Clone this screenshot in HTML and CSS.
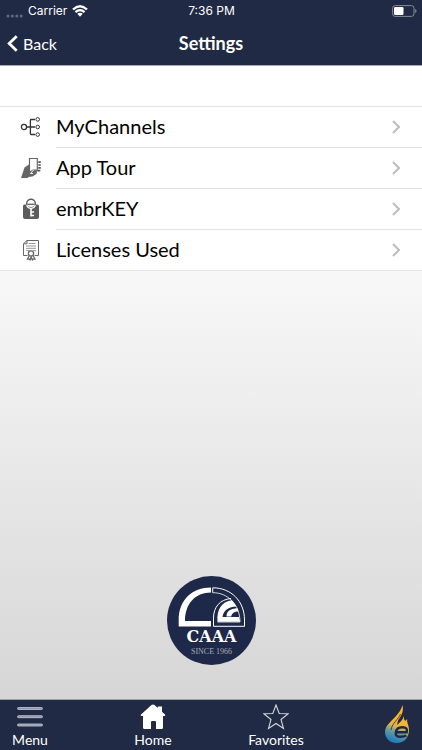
FILE: index.html
```html
<!DOCTYPE html>
<html lang="en">
<head>
    <meta charset="UTF-8">
    <meta name="viewport" content="width=device-width, initial-scale=1.0">
    <title>Settings</title>
    <link rel="stylesheet" href="styles.css">
</head>
<body>
    <header>
        <!-- Status bar -->
        <div class="status">
            <div class="carrier">
                <svg width="17" height="4" viewBox="0 0 17 4" fill="#626a7e"><circle cx="2" cy="2" r="1.5"/><circle cx="6.4" cy="2" r="1.5"/><circle cx="10.8" cy="2" r="1.5"/><circle cx="15.2" cy="2" r="1.5"/></svg>
                <span>Carrier</span>
                <svg width="16" height="12" viewBox="0 0 16 12" fill="none" stroke="#fff" stroke-width="2.3"><path d="M1 4.5Q8-2 15 4.5M3.5 7.2Q8 3 12.5 7.2"/><path d="M5.3 8.8Q8 6.7 10.7 8.8L8 11.7z" fill="#fff" stroke="none"/></svg>
            </div>
            <span>7:36 PM</span>
            <div class="battery">
                <svg width="25" height="12" viewBox="0 0 25 12"><rect x=".6" y=".6" width="21.4" height="10.8" rx="2.6" fill="none" stroke="#858b9b"/><rect x="2" y="2" width="9.5" height="8" rx="1.3" fill="#fff"/><path d="M23.2 4v4q1.3-.5 1.3-2t-1.3-2z" fill="#858b9b"/></svg>
            </div>
        </div>
        <nav class="title-bar">
            <a class="back" href="#">
                <svg width="11" height="17" viewBox="0 0 11 17" fill="none" stroke="#fff" stroke-width="2.8"><path d="M9.7 1.2L2.2 8.5l7.500 7.300"/></svg>
                Back
            </a>
            <h1>Settings</h1>
        </nav>
    </header>

    <main>
        <ul class="settings">
            <li>
                <a href="#">
                    <svg class="icon" viewBox="0 0 22 22" fill="none" stroke="#333" stroke-width="1.3"><circle cx="4" cy="11" r="2.6"/><path d="M6.6 11H15M15 3.5h-3.8q-.8 0-.8.8v13.4q0 .8.8.8H15"/><g stroke-width="1"><circle cx="17.7" cy="3.4" r="1.8"/><circle cx="17.7" cy="11" r="1.8"/><circle cx="17.7" cy="18.6" r="1.8"/></g></svg>
                    <span>MyChannels</span>
                    <svg class="chevron" viewBox="0 0 8 14"><path d="M1 1l6 6-6 6"/></svg>
                </a>
            </li>
            <li>
                <a href="#">
                    <svg class="icon" viewBox="0 0 22 22"><path d="M1 21l2-6 1.500-4.500L9 7.500V14l8.500-1-1 4-4 2.500-4 .5-1 1z" fill="#666"/><path d="M9.500 1.500h7.800v11.700h-4.300l-3.500 2z" fill="#fff" stroke="#666" stroke-width="1.200"/><path d="M13.500 13l-3 3.500h2.500" fill="none" stroke="#fff" stroke-width=".9"/><path d="M18.300 5.200h2.500M18.300 8h2.500M18.300 10.800h2.500M17.500 13.600h2.800" fill="none" stroke="#555" stroke-width="1.700"/></svg>
                    <span>App Tour</span>
                    <svg class="chevron" viewBox="0 0 8 14"><path d="M1 1l6 6-6 6"/></svg>
                </a>
            </li>
            <li>
                <a href="#">
                    <svg class="icon" viewBox="0 0 22 22" fill="none"><path d="M3 8q0-1.500 1.500-1.500h13Q19 6.500 19 8v11q0 2-2 2H5q-2 0-2-2z" fill="#5c5c5c"/><circle cx="11" cy="5.500" r="4.300" fill="#fff" stroke="#5c5c5c" stroke-width="1.400"/><path d="M6.700 7q1 3.300 4.300 3.300T15.300 7" stroke="#fff" stroke-width="1.300"/><path d="M7.500 6.300h7" stroke="#5c5c5c" stroke-width="1.300"/><path d="M11 10v8.500M11 14h3M11 17.500h3" stroke="#fff" stroke-width="1.600"/></svg>
                    <span>embrKEY</span>
                    <svg class="chevron" viewBox="0 0 8 14"><path d="M1 1l6 6-6 6"/></svg>
                </a>
            </li>
            <li>
                <a href="#">
                    <svg class="icon" viewBox="0 0 22 22" fill="none" stroke="#666"><path d="M7.500 16.500h-4V4.800L7 1.500h11.500v15h-4M3.500 4.800H7V1.500"/><path d="M8.500 4.500h7M6 7h10M6 9.300h10M6 11.600h3.500M13 11.600h3" stroke="#999"/><circle cx="11" cy="14.500" r="2.600" fill="#fff" stroke-width="1.300"/><path d="M9.300 16.800L7.500 20l1.700-.2.900 1.200 1-3.200 1.200 3.200.9-1.200 1.700.2-1.800-3.200" stroke-width="1.200"/></svg>
                    <span>Licenses Used</span>
                    <svg class="chevron" viewBox="0 0 8 14"><path d="M1 1l6 6-6 6"/></svg>
                </a>
            </li>
        </ul>

        <svg class="logo" viewBox="12 11 89 89" role="img" aria-label="CAAA since 1966">
            <circle cx="56.500" cy="55.500" r="44.500" fill="#1e2848"/>
            <path d="M23.700 61.500V55C23.700 35 37 22.500 56 22.500V27.500C40 27.500 30 39 30 56H56v5.500z" fill="#fff"/>
            <path d="M57.700 27.700V22.800C76 22.800 89.500 36 89.500 55v6.300H58.500V53C58.500 42 65 34.500 76 33.500" fill="none" stroke="#fff"/>
            <path d="M57.700 27.700C73 27.500 85 40 85 57H62.500" fill="none" stroke="#fff" stroke-width=".8"/>
            <path d="M62.500 56.800C61.500 44 67 36.500 77 35.300L81.500 41.500C72 42 68.500 46 67.500 52H84l1 4.800z" fill="#fff"/>
            <path d="M71.500 51.500C71.500 46.500 75 43.600 82.500 43.300l1 3.200c-4.500 0-6.500 1.800-7.300 5z" fill="#fff"/>
            <text class="logo-name" x="56.500" y="77">CAAA</text>
            <text class="logo-since" x="56.500" y="89">SINCE 1966</text>
        </svg>
    </main>

    <!-- Bottom tabs -->
    <footer>
        <a href="#">
            <svg width="26" height="26" viewBox="0 0 26 26" fill="#8d94a8" stroke="#c9cdd7" stroke-width=".8"><rect x=".5" y="3.500" width="25" height="2" rx="1"/><rect x=".5" y="11.700" width="25" height="2" rx="1"/><rect x=".5" y="20" width="25" height="2" rx="1"/></svg>
            Menu
        </a>
        <a class="home" href="#">
            <svg width="26" height="26" viewBox="0 0 26 26" fill="#fff"><path d="M13 .5q.8 0 1.500.6l3.300 3V2.500H22v5.300l3 2.700q1 1.200-.5 1.500H23v11.500q0 1.500-1.500 1.500H16v-7q0-1-1-1h-3q-1 0-1 1v7H4.500Q3 25 3 23.500V12H1.500Q0 11.700 1 10.500l10.500-9.400Q12.200.5 13 .5z"/></svg>
            Home
        </a>
        <a href="#">
            <svg width="26" height="26" viewBox="0 0 26 26" fill="none" stroke="#d5d8e0" stroke-width="1.100"><path d="M13 1l3.200 8.500 9 .3-7.200 5.700 2.500 9L13 19.500l-7.500 5 2.500-9L.8 9.800l9-.3z"/></svg>
            Favorites
        </a>
        <a class="brand" href="#" aria-label="embr">
            <svg width="26" height="40" viewBox="0 0 26 40">
                <defs>
                    <linearGradient id="flame" gradientUnits="userSpaceOnUse" x1="17" y1="14" x2="9" y2="36">
                        <stop offset="0" stop-color="#f9b62b"/>
                        <stop offset=".4" stop-color="#e5b34a"/>
                        <stop offset=".65" stop-color="#6a9c98"/>
                        <stop offset="1" stop-color="#2580bd"/>
                    </linearGradient>
                </defs>
                <path d="M18.500 1C20 8 17 12 14 16.500l-1 4.500c3-2.500 6-5 6.800-9q-.3 3.500 1.400 5l2-2c-.7 4 2 6.200 1.800 11.500C24.800 33.500 20 39 13 39 6 39 1 34.500 1 28 1 18.500 15 14 18.500 1z" fill="url(#flame)"/>
                <path d="M16.500 10C15 15 8 19 7 26" fill="none" stroke="#202a44" stroke-width=".8"/>
                <path d="M22.300 31.500q-2 1.300-5.500 1.300c-4.300 0-5.500-1.800-5-4.600.5-3.300 2.800-5 6.400-5 4.300 0 5.300 1.800 4.500 5H12.500" fill="none" stroke="#1b2946" stroke-width="2.400"/>
            </svg>
        </a>
    </footer>
</body>
</html>
```
FILE: styles.css
```css
* {
    box-sizing: border-box;
}

body {
    margin: 0;
    min-height: 100vh;
    display: flex;
    flex-direction: column;
    font-family: Lato, sans-serif;
    background: #fff;
}

a {
    color: inherit;
    text-decoration: none;
}

svg {
    display: block;
    flex: none;
}

header {
    background: #202a44;
    color: #fff;
    border-bottom: 1px solid #a5a9b4;
}

.status {
    display: grid;
    grid-template-columns: 1fr auto 1fr;
    align-items: center;
    height: 21px;
    padding: 0 5px 0 6px;
    font-family: Inter, sans-serif;
    font-size: 12px;
}

.carrier {
    display: flex;
    align-items: center;
    gap: 5px;
}

.carrier svg:first-child {
    align-self: flex-end;
}

.battery {
    justify-self: end;
}

.title-bar {
    display: grid;
    grid-template-columns: 1fr auto 1fr;
    align-items: center;
    height: 44px;
    padding: 0 7px;
}

.back {
    display: flex;
    align-items: center;
    gap: 5px;
    font-size: 16px;
}

h1 {
    margin: 0;
    font-size: 18px;
    font-weight: bold;
}

main {
    flex: 1;
    display: flex;
    flex-direction: column;
    align-items: center;
    justify-content: space-between;
    padding-bottom: 34px;
    background: linear-gradient(#fff, #f8f8f8 32%, #d6d6d6);
}

.settings {
    width: 100%;
    margin: 0;
    padding: 40px 0 0;
    list-style: none;
    background: #fff;
    border-bottom: 1px solid #e6e6e6;
}

.settings a {
    display: flex;
    align-items: center;
    padding: 0 22px 0 20px;
}

.settings li:first-child {
    border-top: 1px solid #e2e2e2;
}

.icon {
    width: 22px;
    height: 22px;
    margin-right: 14px;
}

.settings span {
    flex: 1;
    padding-bottom: 2px;
    line-height: 38px;
    font-size: 20px;
    color: #000;
}

.settings li + li::before {
    content: "";
    display: block;
    height: 1px;
    margin-left: 56px;
    background: #e2e2e2;
}

.chevron {
    width: 8px;
    height: 14px;
    fill: none;
    stroke: #bdbdc0;
    stroke-width: 2;
}

.logo {
    width: 89px;
    height: 89px;
}

.logo-name {
    font-family: "DejaVu Serif", serif;
    font-size: 16px;
    font-weight: bold;
    text-anchor: middle;
    fill: #fff;
}

.logo-since {
    font-family: "Liberation Serif", serif;
    font-size: 8px;
    text-anchor: middle;
    fill: #a9adba;
}

footer {
    display: flex;
    justify-content: space-between;
    height: 51px;
    border-top: 1px solid #9a9fac;
    background: #202a44;
    color: #fff;
}

footer a {
    display: flex;
    flex-direction: column;
    align-items: center;
    width: 60px;
    padding-top: 4px;
    font-size: 14px;
    line-height: 20px;
}

footer .home {
    width: 54px;
}

footer .brand {
    width: 50px;
}
```
